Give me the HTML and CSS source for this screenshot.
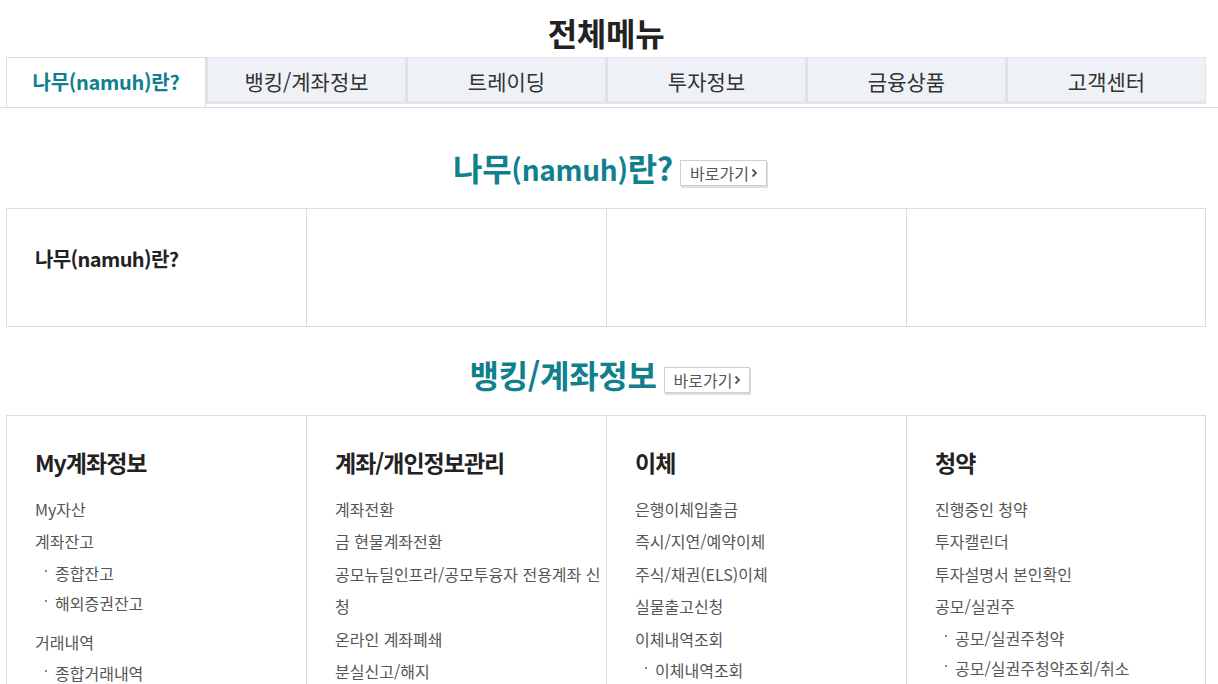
FILE: index.html
```html
<!DOCTYPE html>
<html lang="ko">
<head>
<meta charset="utf-8">
<title>전체메뉴</title>
<link rel="stylesheet" href="styles.css">
</head>
<body>
<div class="page">
  <h1 class="page-title wrap">전체메뉴</h1>
  <nav class="tabbar">
    <ul class="tabs wrap">
      <li class="tab tab-active">나무(namuh)란?</li>
      <li class="tab">뱅킹/계좌정보</li>
      <li class="tab">트레이딩</li>
      <li class="tab">투자정보</li>
      <li class="tab">금융상품</li>
      <li class="tab">고객센터</li>
    </ul>
  </nav>

  <section class="section section-first wrap">
    <div class="sec-head">
      <h2 class="sec-title">나무<span class="latin">(namuh)</span>란?</h2>
      <a class="go-btn" href="#">바로가기<svg class="chev" width="7" height="10" viewBox="0 0 7 10"><polyline points="1.5,1.5 5,5 1.5,8.5" fill="none" stroke="#555" stroke-width="1.8"/></svg></a>
    </div>
    <div class="grid grid-intro">
      <div class="cell"><h3 class="cell-title cell-title-sm">나무(namuh)란?</h3></div>
      <div class="cell"></div>
      <div class="cell"></div>
      <div class="cell"></div>
    </div>
  </section>

  <section class="section section-second wrap">
    <div class="sec-head">
      <h2 class="sec-title">뱅킹/계좌정보</h2>
      <a class="go-btn" href="#">바로가기<svg class="chev" width="7" height="10" viewBox="0 0 7 10"><polyline points="1.5,1.5 5,5 1.5,8.5" fill="none" stroke="#555" stroke-width="1.8"/></svg></a>
    </div>
    <div class="grid grid-menu">
      <div class="cell">
        <h3 class="cell-title">My계좌정보</h3>
        <ul class="items">
          <li class="item">My자산</li>
          <li class="item">계좌잔고
            <ul class="sub">
              <li>종합잔고</li>
              <li>해외증권잔고</li>
            </ul>
          </li>
          <li class="item">거래내역
            <ul class="sub">
              <li>종합거래내역</li>
              <li>해외거래내역</li>
            </ul>
          </li>
        </ul>
      </div>
      <div class="cell">
        <h3 class="cell-title">계좌/개인정보관리</h3>
        <ul class="items">
          <li class="item">계좌전환</li>
          <li class="item">금 현물계좌전환</li>
          <li class="item">공모뉴딜인프라/공모투융자 전용계좌 신청</li>
          <li class="item">온라인 계좌폐쇄</li>
          <li class="item">분실신고/해지</li>
          <li class="item">비밀번호 관리</li>
        </ul>
      </div>
      <div class="cell">
        <h3 class="cell-title">이체</h3>
        <ul class="items">
          <li class="item">은행이체입출금</li>
          <li class="item">즉시/지연/예약이체</li>
          <li class="item">주식/채권(ELS)이체</li>
          <li class="item">실물출고신청</li>
          <li class="item">이체내역조회
            <ul class="sub">
              <li>이체내역조회</li>
              <li>예약이체조회</li>
            </ul>
          </li>
        </ul>
      </div>
      <div class="cell">
        <h3 class="cell-title">청약</h3>
        <ul class="items">
          <li class="item">진행중인 청약</li>
          <li class="item">투자캘린더</li>
          <li class="item">투자설명서 본인확인</li>
          <li class="item">공모/실권주
            <ul class="sub">
              <li>공모/실권주청약</li>
              <li>공모/실권주청약조회/취소</li>
            </ul>
          </li>
        </ul>
      </div>
    </div>
  </section>
</div>
</body>
</html>
```

FILE: styles.css
```css
* { box-sizing: border-box; }
html, body { margin: 0; padding: 0; background: #fff; }
body {
  font-family: "Noto Sans CJK KR", "Noto Sans", sans-serif;
  color: #333;
  overflow: hidden;
}
ul { list-style: none; margin: 0; padding: 0; }
h1, h2, h3 { margin: 0; }

.page { padding-top: 12px; }
.wrap { width: 1200px; margin-left: 6px; }

.page-title {
  text-align: center;
  font-size: 32px;
  line-height: 40px;
  font-weight: 700;
  letter-spacing: -0.3px;
  color: #222;
  margin-bottom: 5px;
}

.tabbar {
  border-bottom: 1px solid #dcdcdc;
  height: 51px;
}
.tabs {
  display: grid;
  grid-template-columns: repeat(6, 1fr);
  height: 50px;
}
.tab {
  display: flex;
  align-items: center;
  justify-content: center;
  font-size: 21px;
  color: #333;
  background: #eef2f7;
  border: 1px solid #dfe2e6;
  border-left-width: 2px;
  border-bottom: 3px solid #e4e6ea;
  height: 47px;
  padding-top: 2px;
}
.tab-active {
  background: #fff;
  color: #11808e;
  font-size: 20px;
  font-weight: 700;
  letter-spacing: -0.3px;
  border: 1px solid #dcdcdc;
  border-bottom: none;
  height: 50px;
  padding-top: 0;
  padding-bottom: 2px;
}

.section-first { margin-top: 39px; }
.section-second { margin-top: 27px; }

.sec-head {
  display: flex;
  justify-content: center;
  align-items: flex-end;
  gap: 7px;
  height: 40px;
  margin-bottom: 21px;
  padding-left: 8px;
}
.sec-title {
  font-size: 32px;
  line-height: 40px;
  font-weight: 700;
  letter-spacing: -0.3px;
  color: #11808e;
}
.latin { font-size: 28px; line-height: 1; }
.go-btn {
  display: inline-flex;
  align-items: center;
  gap: 2px;
  height: 26px;
  padding: 0 8px 0 9px;
  border: 1px solid #cfcfcf;
  box-shadow: 1px 2px 0 #dedede;
  font-size: 16px;
  color: #555;
  text-decoration: none;
  background: #fff;
  margin-bottom: 1px;
}
.chev { display: block; }

.grid {
  display: grid;
  grid-template-columns: 299px 300px 300px 1fr;
  border: 1px solid #dcdcdc;
}
.cell {
  padding: 28px 0 24px 28px;
  border-left: 1px solid #dcdcdc;
}
.cell:first-child { border-left: none; }
.grid-intro .cell { padding: 32px 0 49px 28px; }

.cell-title {
  font-size: 23px;
  line-height: 36px;
  font-weight: 700;
  letter-spacing: -1px;
  color: #222;
  margin-bottom: 13px;
}
.cell-title-sm {
  font-size: 20px;
  letter-spacing: -0.6px;
  margin-bottom: 0;
}

.items { font-size: 16px; color: #555; }
.item { line-height: 32.4px; word-break: break-all; }
.sub { line-height: 30px; padding-left: 10px; margin-bottom: 8px; }
.sub li { display: flex; align-items: center; }
.sub li::before {
  content: "";
  width: 2px;
  height: 2px;
  background: #888;
  margin-right: 8px;
  margin-top: -4px;
  flex: none;
}
```
